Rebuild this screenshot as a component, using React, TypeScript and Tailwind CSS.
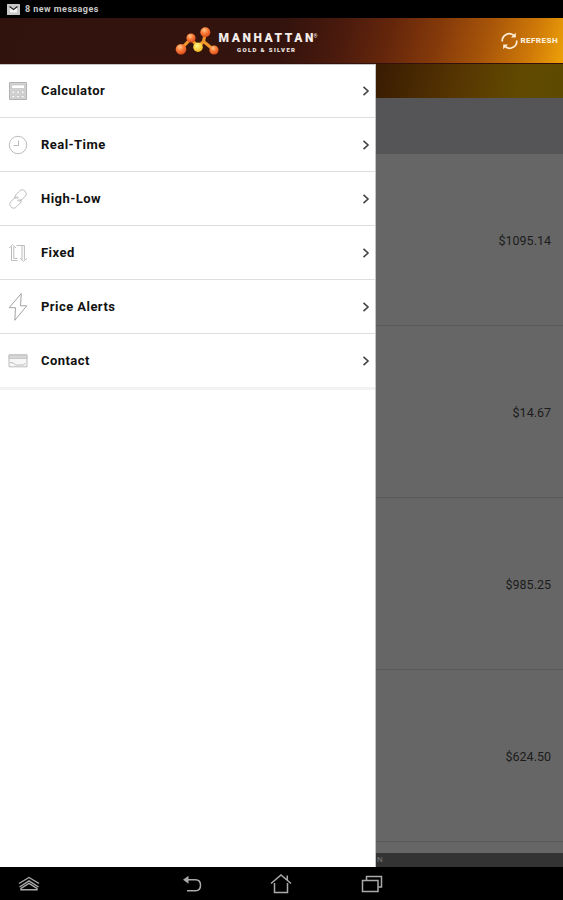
import type { ReactNode } from 'react';

type MenuItem = {
  label: string;
  icon: ReactNode;
};

const menuItems: MenuItem[] = [
  {
    label: 'Calculator',
    icon: (
      <>
        <path d="M1.5 1.5h17v17h-17z" fill="#d2d2d2" stroke="#aaa" />
        <path d="M3.5 4h13v3.5h-13z" fill="#fff" stroke="#bbb" strokeWidth={0.6} />
        <path d="M4 10h2.6v2.4H4zM8.7 10h2.6v2.4H8.7zM13.4 10H16v2.4h-2.6zM4 14.5h2.6v2.2H4zM8.7 14.5h2.6v2.2H8.7zM13.4 14.5H16v2.2h-2.6z" fill="#fff" stroke="#bbb" strokeWidth={0.6} />
      </>
    ),
  },
  {
    label: 'Real-Time',
    icon: (
      <>
        <circle cx="10" cy="10" r="8.7" />
        <path d="M10.5 5.5v5h-5" />
      </>
    ),
  },
  {
    label: 'High-Low',
    icon: (
      <>
        <path d="M7.2 9.8a3.4 3.4 0 0 1 .6-3.9l3.6-3.6a3.6 3.6 0 0 1 5.6-.2 3.6 3.6 0 0 1 .2 5.2l-3.7 3.7a3.5 3.5 0 0 1-3.7.7l1.7-1.8" />
        <path d="M12.8 10.2a3.4 3.4 0 0 1-.6 3.9l-3.6 3.6a3.6 3.6 0 0 1-5.6.2 3.6 3.6 0 0 1-.2-5.2l3.7-3.7a3.5 3.5 0 0 1 3.7-.7l-1.7 1.8" />
      </>
    ),
  },
  {
    label: 'Fixed',
    icon: (
      <>
        <path d="M3.5 3.5v14h6M5.8 4v11.5h3.7M1 5l3.5-3L8 5M8.500 2.5h5" />
        <path d="M14 2.5v14M16.4 2.5v14M13.5 2.5h3M12 15.3l3.5 2.9 3.5-2.9" />
      </>
    ),
  },
  {
    label: 'Price Alerts',
    icon: <path d="M13.3-3.5L1.2 10.7h6.3L6.8 23.3 18.8 8.8h-6.3z" stroke="#999" />,
  },
  {
    label: 'Contact',
    icon: (
      <>
        <path d="M1 3.8h18v12H1z" fill="#f7f7f7" />
        <path d="M1 4h18v3.5H1z" fill="#d6d6d6" stroke="#c4c4c4" />
        <path d="M2 11.5l3.5.5 2 2H15l2.5-1.5" />
      </>
    ),
  },
];

const prices = ['$1095.14', '$14.67', '$985.25', '$624.50'];

function StatusBar() {
  return (
    <div className="flex h-[18px] shrink-0 items-center gap-[5px] bg-black pl-[7px]">
      <svg className="h-[11px] w-[13px]" viewBox="0 0 13 11">
        <rect width="13" height="11" rx="0.5" fill="#c8c8c8" />
        <path d="M3 8.5V3l3.5 2.5L10 3v5.5z" fill="#f4f4f4" />
        <path d="M2.5 2.5l4 3 4-3" fill="none" stroke="#222" strokeWidth={1.2} />
      </svg>
      <span className="text-[9px] font-bold leading-none tracking-[0.45px] text-[#c8c8c8]">8 new messages</span>
    </div>
  );
}

function Logo() {
  return (
    <svg className="ml-[172px] h-[45px] w-[150px]" viewBox="172 18 150 45">
      <defs>
        <radialGradient id="ember" cx="0.4" cy="0.3" r="0.7">
          <stop offset="0" stopColor="#ffc890" />
          <stop offset="0.45" stopColor="#f9803a" />
          <stop offset="1" stopColor="#dc4a1c" />
        </radialGradient>
        <radialGradient id="gold" cx="0.4" cy="0.35" r="0.7">
          <stop offset="0" stopColor="#fff68a" />
          <stop offset="1" stopColor="#f5b414" />
        </radialGradient>
      </defs>
      <path d="M181 49l10-10.5 7 8.5 5.5-5.5 2-9.5M203.5 41.5L214 50" fill="none" stroke="#ee9428" strokeWidth={3.2} strokeLinecap="round" strokeLinejoin="round" />
      <circle cx="181" cy="49.2" r="5.3" fill="url(#ember)" />
      <circle cx="191" cy="38" r="4.6" fill="url(#ember)" />
      <circle cx="198" cy="47.2" r="4.8" fill="url(#gold)" />
      <circle cx="205.3" cy="32.2" r="5" fill="url(#ember)" />
      <circle cx="214" cy="50" r="4.6" fill="url(#ember)" />
      <g fill="#f3ece9" fontFamily="Roboto, sans-serif" fontWeight="900">
        <text x="218.5" y="41.5" fontSize="12" textLength="95">MANHATTAN</text>
        <text x="313.5" y="37.5" fontSize="5">®</text>
        <text x="237" y="51.5" fontSize="6" textLength="58">GOLD &amp; SILVER</text>
      </g>
    </svg>
  );
}

function Header() {
  return (
    <header className="flex h-[46px] shrink-0 items-center justify-between border-b border-[#35110d] bg-[linear-gradient(105deg,#31130e_0%,#33130d_50%,#4a1a0d_60%,#66270b_69%,#84390a_77%,#a95609_86%,#cf7a08_94%,#eda208_100%)] pr-[5px]">
      <Logo />
      <button className="flex items-center gap-[2px] text-[#ffeed8]">
        <svg className="h-[18px] w-[17px]" viewBox="0 0 17 18" fill="none" stroke="currentColor" strokeWidth={1.7}>
          <path d="M1.3 9.5A7 7 0 0 1 12.5 3.2M15.7 8.5A7 7 0 0 1 4.5 14.8" />
          <path d="M10 5.5h4.8V.7zM7 12.5H2.2v4.8z" fill="currentColor" stroke="none" />
        </svg>
        <span className="pt-px text-[8px] font-black leading-none tracking-[0.45px]">REFRESH</span>
      </button>
    </header>
  );
}

function MenuRow({ label, icon }: MenuItem) {
  return (
    <li className="flex h-[54px] items-center border-b border-[#dedede] pl-2 pr-[5px] last:h-[56px] last:border-b-[3px] last:border-[#f2f2f2]">
      <svg className="h-5 w-5 shrink-0 overflow-visible" viewBox="0 0 20 20" fill="none" stroke="#b3b3b3" strokeWidth={0.9}>
        {icon}
      </svg>
      <span className="ml-[13px] flex-1 pt-px text-[13px] font-bold leading-5 tracking-[0.45px] text-[#111]">{label}</span>
      <svg className="h-[10px] w-[8px]" viewBox="0 0 8 10" fill="none" stroke="#444" strokeWidth={1.6}>
        <path d="M1.5 .8L6 5 1.5 9.2" />
      </svg>
    </li>
  );
}

function NavBar() {
  return (
    <nav className="flex h-[33px] shrink-0 items-center bg-black pl-[18px] text-[#aaa]">
      <svg className="h-[22px] w-[22px]" viewBox="0 0 22 22" fill="none" stroke="currentColor" strokeWidth={1.4}>
        <path d="M1 10.5l10-6 10 6M1.5 14L11 7.8l9.5 6.2M3 16.8v-1.5l8-5 8 5v1.5z" />
      </svg>
      <svg className="ml-[142px] h-[22px] w-[22px]" viewBox="0 0 22 22" fill="none" stroke="currentColor" strokeWidth={1.5}>
        <path d="M5 6.8h8.5q5 0 5 5.5t-5 5.5H5" />
        <path d="M1 6.8l5.500-4v8z" fill="currentColor" stroke="none" />
      </svg>
      <svg className="ml-[66px] h-[22px] w-[22px]" viewBox="0 0 22 22" fill="none" stroke="currentColor" strokeWidth={1.5}>
        <path d="M1 10.5L11 2l10 8.500M17.3 7V2.5M4.5 10v9.5h13V10" />
      </svg>
      <svg className="ml-[69px] h-[22px] w-[22px]" viewBox="0 0 22 22" fill="none" stroke="currentColor" strokeWidth={1.5}>
        <path d="M1.5 7.500H17v11H1.5zM5.5 7V3.5h15V14h-3" />
      </svg>
    </nav>
  );
}

export default function App() {
  return (
    <div className="flex h-[900px] w-[563px] flex-col overflow-hidden bg-black font-['Roboto',sans-serif]">
      <StatusBar />
      <Header />
      <main className="flex min-h-0 flex-1">
        {/* Slide-out menu */}
        <aside className="w-[376px] shrink-0 border-r border-t border-[#c4c4c4] bg-white">
          <ul className="-mt-px">
            {menuItems.map((item) => (
              <MenuRow key={item.label} {...item} />
            ))}
          </ul>
        </aside>

        {/* Dimmed price list behind the menu */}
        <section className="flex flex-1 flex-col bg-[#666]">
          <div className="h-[34px] bg-[linear-gradient(105deg,#381b02_0%,#573602_45%,#614900_75%,#5c4a00_100%)]" />
          <div className="h-[56px] bg-[#555557]" />
          {prices.map((price) => (
            <div key={price} className="flex h-[172px] items-center justify-end border-b border-[#5b5b5b] pr-[12px] pt-[3px] text-[12.5px] text-[#1c1c1c]">
              {price}
            </div>
          ))}
          <div className="h-[11px]" />
          <div className="h-[14px] overflow-hidden bg-[#333] pl-px text-[8px] leading-[14px] text-[#777]">N</div>
        </section>
      </main>
      <NavBar />
    </div>
  );
}
